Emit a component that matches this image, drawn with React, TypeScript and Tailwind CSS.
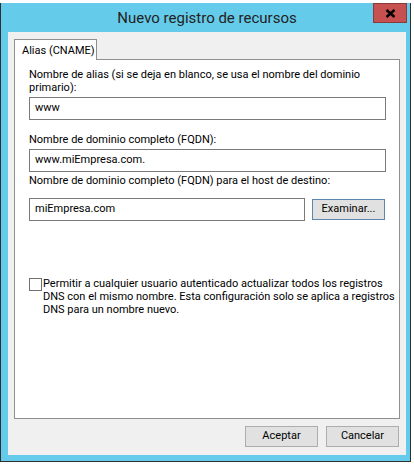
export default function App() {
  return (
    <div className="w-[414px] h-[466px] bg-white overflow-hidden font-['Roboto',sans-serif] text-[11px] text-black">
      <div className="mt-[3px] w-[411px] h-[459px] bg-[#65CBEA] border-l border-r border-b border-[#2F2F2F] flex flex-col">
        <div className="h-[29px] relative flex items-center justify-center pl-[3px]">
          <span className="text-[15px] leading-[20px] text-[#222222]">Nuevo registro de recursos</span>
          <div className="absolute left-[372px] top-0 w-[34px] h-[20px] bg-[#C75050] border border-[#8A3A3A] flex items-center justify-center">
            <svg width="11" height="9" viewBox="0 0 11 9">
              <path d="M1.5 1 L9.5 8 M9.5 1 L1.5 8" stroke="#000" strokeWidth="2.4" strokeLinecap="butt" />
            </svg>
          </div>
        </div>
        <div className="ml-[7px] w-[398px] h-[423px] bg-[#F0F0F0] flex flex-col pl-[6px] pr-[6px] pt-[7px]">
          <div className="relative z-10 w-[83px] h-[21px] bg-white border-l border-t border-r border-[#8E8F8F] flex items-center pl-[7px] leading-[13px]">
            Alias (CNAME)
          </div>
          <div className="-mt-[1px] w-[386px] h-[360px] bg-white border border-[#8E8F8F] flex flex-col pl-[14px] pt-[8px]">
            <div className="leading-[13px] whitespace-nowrap">
              Nombre de alias (si se deja en blanco, se usa el nombre del dominio
              <br />
              primario):
            </div>
            <div className="mt-[3px] w-[357px] h-[23px] border border-[#7A7A7A] bg-white flex items-center pl-[5px]">
              www
            </div>
            <div className="mt-[13px] leading-[13px] whitespace-nowrap">Nombre de dominio completo (FQDN):</div>
            <div className="mt-[3px] w-[357px] h-[23px] border border-[#7A7A7A] bg-white flex items-center pl-[5px]">
              www.miEmpresa.com.
            </div>
            <div className="mt-[2px] leading-[13px] whitespace-nowrap">Nombre de dominio completo (FQDN) para el host de destino:</div>
            <div className="mt-[11px] flex items-center gap-[7px]">
              <div className="w-[276px] h-[23px] border border-[#7A7A7A] bg-white flex items-center pl-[5px]">
                miEmpresa.com
              </div>
              <div className="w-[73px] h-[21px] bg-[#E1E1E1] border border-[#5C86AE] flex items-center justify-center">
                Examinar...
              </div>
            </div>
            <div className="mt-[56px] flex items-start">
              <div className="mt-[1px] w-[13px] h-[13px] border border-[#707070] bg-white shrink-0" />
              <div className="pl-[1px] leading-[13px] whitespace-nowrap">
                Permitir a cualquier usuario autenticado actualizar todos los registros
                <br />
                DNS con el mismo nombre. Esta configuración solo se aplica a registros
                <br />
                DNS para un nombre nuevo.
              </div>
            </div>
          </div>
          <div className="mt-[7px] flex justify-end gap-[8px] pr-[1px]">
            <div className="w-[73px] h-[21px] bg-[#E1E1E1] border border-[#ADADAD] flex items-center justify-center">
              Aceptar
            </div>
            <div className="w-[73px] h-[21px] bg-[#E1E1E1] border border-[#ADADAD] flex items-center justify-center">
              Cancelar
            </div>
          </div>
        </div>
      </div>
    </div>
  );
}
